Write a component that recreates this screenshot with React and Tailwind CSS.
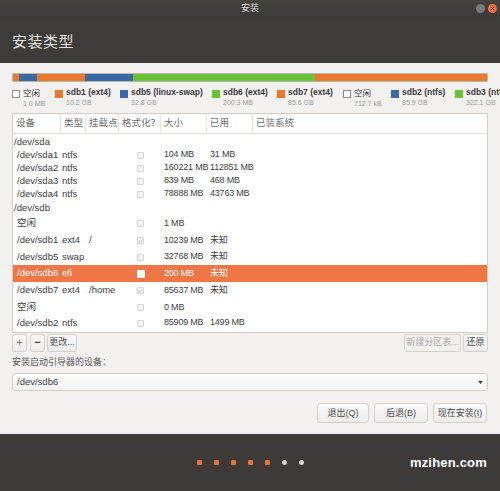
import React from 'react';

const FONT = { fontFamily: '"Liberation Sans", "Noto Sans CJK SC", sans-serif' };

const segments = [
  ['bg-[#e9792f]', 'w-[6px]'],
  ['bg-[#3a69a5]', 'w-[18px]'],
  ['bg-[#e9792f]', 'w-[48px]'],
  ['bg-[#3a69a5]', 'w-[48px]'],
  ['bg-[#6cc236]', 'w-[182px]'],
  ['bg-[#e9792f]', 'flex-1'],
];

const legend = [
  { name: '空闲', size: '1.0 MB', box: 'bg-white border border-[#8a8a8a]', w: 'w-[43px]', cjk: true },
  { name: 'sdb1 (ext4)', size: '10.2 GB', box: 'bg-[#e9792f]', w: 'w-[65px]' },
  { name: 'sdb5 (linux-swap)', size: '32.8 GB', box: 'bg-[#3a69a5]', w: 'w-[92px]' },
  { name: 'sdb6 (ext4)', size: '200.3 MB', box: 'bg-[#6cc236]', w: 'w-[65px]' },
  { name: 'sdb7 (ext4)', size: '85.6 GB', box: 'bg-[#e9792f]', w: 'w-[66px]' },
  { name: '空闲', size: '712.7 kB', box: 'bg-white border border-[#8a8a8a]', w: 'w-[48px]', cjk: true },
  { name: 'sdb2 (ntfs)', size: '85.9 GB', box: 'bg-[#3a69a5]', w: 'w-[64px]' },
  { name: 'sdb3 (ntfs)', size: '322.1 GB', box: 'bg-[#6cc236]', w: 'w-[64px]' },
];

// [device, type, mount, check, size, used, height, indent, selected]
const rows = [
  ['/dev/sda', '', '', null, '', '', 'h-[13px]', false],
  ['/dev/sda1', 'ntfs', '', 'off', '104 MB', '31 MB', 'h-[13px]', true],
  ['/dev/sda2', 'ntfs', '', 'off', '160221 MB', '112851 MB', 'h-[13px]', true],
  ['/dev/sda3', 'ntfs', '', 'off', '839 MB', '468 MB', 'h-[13px]', true],
  ['/dev/sda4', 'ntfs', '', 'off', '78888 MB', '43763 MB', 'h-[14px]', true],
  ['/dev/sdb', '', '', null, '', '', 'h-[14px]', false],
  ['空闲', '', '', 'off', '1 MB', '', 'h-[17px]', true],
  ['/dev/sdb1', 'ext4', '/', 'on', '10239 MB', '未知', 'h-[17px]', true],
  ['/dev/sdb5', 'swap', '', 'off', '32768 MB', '未知', 'h-[16px]', true],
  ['/dev/sdb6', 'efi', '', 'sel', '200 MB', '未知', 'h-[17px]', true, true],
  ['/dev/sdb7', 'ext4', '/home', 'on', '85637 MB', '未知', 'h-[17px]', true],
  ['空闲', '', '', 'off', '0 MB', '', 'h-[17px]', true],
  ['/dev/sdb2', 'ntfs', '', 'off', '85909 MB', '1499 MB', 'h-[14px]', true],
];

const cols = 'grid grid-cols-[48px_25px_33px_42px_46px_46px_1fr]';

function Check({ state }) {
  if (!state) return null;
  if (state === 'sel')
    return <span className="block w-[8px] h-[8px] bg-[#fbfbfb] rounded-[1px]" />;
  return (
    <span className="flex items-center justify-center w-[7px] h-[7px] border border-[#d6d6d6] bg-[#f4f4f4] rounded-[1px]">
      {state === 'on' && (
        <svg viewBox="0 0 8 8" className="w-[6px] h-[6px]">
          <path d="M1.2 4.2 L3.2 6 L6.8 1.6" stroke="#b4b4b4" strokeWidth="1.2" fill="none" />
        </svg>
      )}
    </span>
  );
}

function Btn({ children, className = '', disabled }) {
  return (
    <button
      type="button"
      className={`h-[18px] border border-[#d2d0cc] rounded-[3px] bg-gradient-to-b from-[#fafafa] to-[#ececec] text-[9px] leading-none whitespace-nowrap ${disabled ? 'text-[#a9a9a9]' : 'text-[#4a4a4a]'} ${className}`}
    >
      {children}
    </button>
  );
}

export default function App() {
  return (
    <div className="w-[500px] h-[491px] flex flex-col bg-[#f2f1f0] overflow-hidden" style={FONT}>
      {/* title bar */}
      <div className="h-[17px] relative flex items-center justify-center bg-gradient-to-b from-[#45443f] to-[#3b3a36]">
        <span className="text-[9px] text-[#dfdbd2]">安装</span>
        <span className="absolute right-[15px] top-[4px] w-[9px] h-[9px] rounded-full bg-[#7b7a76]" />
        <span className="absolute right-[3px] top-[4px] w-[9px] h-[9px] rounded-full bg-[#ef6e3a] flex items-center justify-center">
          <svg viewBox="0 0 8 8" className="w-[5px] h-[5px]">
            <path d="M1.5 1.5 L6.5 6.5 M6.5 1.5 L1.5 6.5" stroke="#5a2a16" strokeWidth="1.3" />
          </svg>
        </span>
      </div>

      {/* header */}
      <div className="h-[46px] bg-[#3d3c38] flex items-center px-[12px] pt-[4px]">
        <span className="text-[15px] text-[#e2e0dc] tracking-[0.5px]">安装类型</span>
      </div>

      {/* content */}
      <div className="flex-1 flex flex-col px-[12px] pt-[10px]">
        <div className="h-[9px] flex border border-[#b9b6b0] rounded-[1px] overflow-hidden">
          {segments.map(([c, w], i) => (
            <div key={i} className={`${c} ${w} h-full`} />
          ))}
        </div>

        <div className="flex mt-[6px] h-[22px] overflow-hidden whitespace-nowrap -mr-[12px]">
          {legend.map((l, i) => (
            <div key={i} className={`${l.w} shrink-0 flex items-start gap-[3px]`}>
              <span className={`mt-[2px] w-[8px] h-[8px] shrink-0 ${l.box}`} />
              <div className="flex flex-col leading-none">
                <span className={`text-[8.5px] text-[#3a3a3a] ${l.cjk ? 'font-normal mt-[1px]' : 'font-bold'}`}>{l.name}</span>
                <span className="text-[7px] text-[#9a9a9a] mt-[2px]">{l.size}</span>
              </div>
            </div>
          ))}
        </div>

        {/* partition table */}
        <div className="mt-[3px] h-[220px] bg-white border border-[#cfcdc9] overflow-hidden text-[9.5px] text-[#3c3c3c] whitespace-nowrap">
          <div className={`${cols} h-[20px] border-b border-[#e2e0dd] text-[#6c6c6c]`}>
            {['设备', '类型', '挂载点', '格式化？', '大小', '已用', '已装系统'].map((h, i) => (
              <div key={i} className={`flex items-center pl-[3px] ${i < 6 ? 'border-r border-[#e7e5e2]' : ''}`}>
                {h}
              </div>
            ))}
          </div>
          <div className="pt-[1px]">
            {rows.map((r, i) => {
              const sel = r[8];
              return (
                <div
                  key={i}
                  className={`${cols} ${r[6]} items-center ${sel ? 'bg-[#ef7646] text-white' : ''}`}
                >
                  <div className={r[7] ? 'pl-[4px]' : 'pl-[1px]'}>{r[0]}</div>
                  <div className="pl-[1px]">{r[1]}</div>
                  <div className="pl-[3px]">{r[2]}</div>
                  <div className="flex justify-center pl-[1px]">
                    <Check state={r[3]} />
                  </div>
                  <div className="pl-[3px] text-[9px] tracking-[-0.2px]">{r[4]}</div>
                  <div className="pl-[3px] text-[9px] tracking-[-0.2px]">{r[5]}</div>
                  <div />
                </div>
              );
            })}
          </div>
        </div>

        <div className="flex items-center mt-[1px] h-[17px]">
          <Btn className="w-[15px] text-[11px] text-[#777]">+</Btn>
          <Btn className="w-[15px] ml-[3px] font-bold text-[11px]">−</Btn>
          <Btn className="w-[30px] ml-[2px]">更改...</Btn>
          <div className="flex-1" />
          <Btn disabled className="w-[57px] bg-none bg-[#f1f0ef]">新建分区表...</Btn>
          <Btn className="w-[25px] ml-[2px]">还原</Btn>
        </div>

        <div className="mt-[7px] text-[9px] text-[#555] leading-none">安装启动引导器的设备：</div>

        <div className="mt-[6px] h-[18px] flex items-center justify-between px-[4px] border border-[#cfcdc9] rounded-[3px] bg-gradient-to-b from-[#fdfdfd] to-[#f3f3f3] text-[9.5px] text-[#3c3c3c]">
          <span>/dev/sdb6</span>
          <svg viewBox="0 0 6 4" className="w-[5px] h-[3px]">
            <path d="M0 0 H6 L3 4 Z" fill="#333" />
          </svg>
        </div>

        <div className="mt-[12px] flex justify-end gap-[5px] pr-[1px]">
          <Btn className="w-[52px] h-[20px]">退出(Q)</Btn>
          <Btn className="w-[54px] h-[20px]">后退(B)</Btn>
          <Btn className="w-[54px] h-[20px]">现在安装(I)</Btn>
        </div>
      </div>

      {/* footer */}
      <div className="h-[57px] bg-[#3d3a37] relative flex items-center justify-center">
        <div className="flex gap-[12px]">
          {[0, 1, 2, 3, 4].map((i) => (
            <span key={i} className="w-[5px] h-[5px] rounded-[1px] bg-[#e4703f]" />
          ))}
          {[0, 1].map((i) => (
            <span key={i} className="w-[5px] h-[5px] rounded-full bg-[#d5d3cf]" />
          ))}
        </div>
        <span className="absolute right-[13px] top-[19px] text-[13px] font-bold text-white tracking-[0.2px]">
          mzihen.com
        </span>
      </div>
    </div>
  );
}
